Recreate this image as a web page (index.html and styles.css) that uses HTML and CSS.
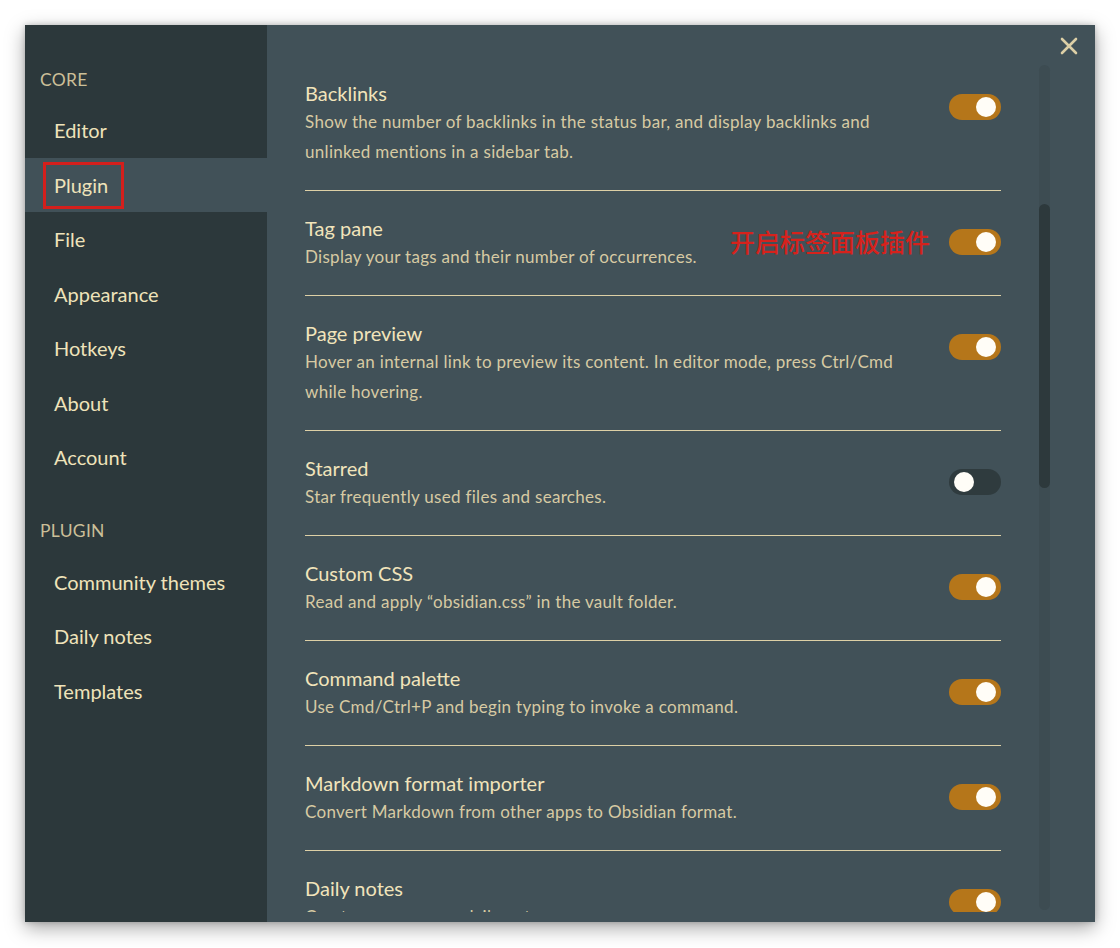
FILE: index.html
```html
<!DOCTYPE html>
<html lang="en">
<head>
<meta charset="utf-8">
<title>Settings</title>
<link rel="stylesheet" href="styles.css">
</head>
<body>
<div class="window">
  <aside class="sidebar">
    <div class="group-title">Core</div>
    <div class="nav-item">Editor</div>
    <div class="nav-item active">Plugin<span class="mark-box"></span></div>
    <div class="nav-item">File</div>
    <div class="nav-item">Appearance</div>
    <div class="nav-item">Hotkeys</div>
    <div class="nav-item">About</div>
    <div class="nav-item">Account</div>
    <div class="group-title second">Plugin</div>
    <div class="nav-item">Community themes</div>
    <div class="nav-item">Daily notes</div>
    <div class="nav-item">Templates</div>
  </aside>
  <main class="main">
    <div class="close"><svg width="18" height="18" viewBox="0 0 18 18"><path d="M2 2 L16 16 M16 2 L2 16" stroke="#dccfa6" stroke-width="2.6" stroke-linecap="round" fill="none"/></svg></div>
    <div class="content">
      <div class="row">
        <div class="info">
          <div class="title">Backlinks</div>
          <div class="desc">Show the number of backlinks in the status bar, and display backlinks and unlinked mentions in a sidebar tab.</div>
        </div>
        <div class="toggle on"><span class="knob"></span></div>
      </div>
      <div class="row">
        <div class="info">
          <div class="title">Tag pane</div>
          <div class="desc">Display your tags and their number of occurrences.</div>
        </div>
        <span class="note">开启标签面板插件</span>
        <div class="toggle on"><span class="knob"></span></div>
      </div>
      <div class="row">
        <div class="info">
          <div class="title">Page preview</div>
          <div class="desc">Hover an internal link to preview its content. In editor mode, press Ctrl/Cmd while hovering.</div>
        </div>
        <div class="toggle on"><span class="knob"></span></div>
      </div>
      <div class="row">
        <div class="info">
          <div class="title">Starred</div>
          <div class="desc">Star frequently used files and searches.</div>
        </div>
        <div class="toggle off"><span class="knob"></span></div>
      </div>
      <div class="row">
        <div class="info">
          <div class="title">Custom CSS</div>
          <div class="desc">Read and apply “obsidian.css” in the vault folder.</div>
        </div>
        <div class="toggle on"><span class="knob"></span></div>
      </div>
      <div class="row">
        <div class="info">
          <div class="title">Command palette</div>
          <div class="desc">Use Cmd/Ctrl+P and begin typing to invoke a command.</div>
        </div>
        <div class="toggle on"><span class="knob"></span></div>
      </div>
      <div class="row">
        <div class="info">
          <div class="title">Markdown format importer</div>
          <div class="desc">Convert Markdown from other apps to Obsidian format.</div>
        </div>
        <div class="toggle on"><span class="knob"></span></div>
      </div>
      <div class="row last">
        <div class="info">
          <div class="title">Daily notes</div>
          <div class="desc">Create or open your daily note.</div>
        </div>
        <div class="toggle on"><span class="knob"></span></div>
      </div>
    </div>
    <div class="scrollbar"><div class="thumb"></div></div>
  </main>
</div>
</body>
</html>
```

FILE: styles.css
```css
* { box-sizing: border-box; }
html, body { margin: 0; padding: 0; background: #ffffff; }
body {
  padding: 25px;
  font-family: Lato, "Noto Sans", sans-serif;
}
.window {
  width: 1070px;
  height: 897px;
  display: flex;
  box-shadow: 0 6px 18px rgba(0,0,0,0.35), 0 0 6px rgba(0,0,0,0.2);
  overflow: hidden;
}
.sidebar {
  width: 242px;
  flex: none;
  background: #2c383b;
  padding-top: 43px;
}
.group-title {
  padding-left: 15px;
  font-size: 17.5px;
  line-height: 24px;
  letter-spacing: 0.3px;
  text-transform: uppercase;
  color: #cbbf98;
  margin-bottom: 11px;
}
.group-title.second { margin-top: 34px; margin-bottom: 12px; }
.nav-item {
  position: relative;
  height: 54.5px;
  line-height: 54.5px;
  padding-left: 29px;
  font-size: 20px;
  color: #efe3ba;
}
.nav-item.active { background: #415158; }
.mark-box {
  position: absolute;
  left: 18px;
  top: 4px;
  width: 81px;
  height: 47px;
  border: 3.5px solid #d41f1c;
}
.main {
  position: relative;
  flex: 1;
  display: flex;
  background: #415158;
  padding: 31px 45px 10px 38px;
}
.close {
  position: absolute;
  top: 12px;
  right: 17px;
  width: 18px;
  height: 18px;
}
.close svg { display: block; }
.content {
  flex: 1;
  overflow: hidden;
  margin-right: 38px;
}
.row {
  position: relative;
  display: flex;
  align-items: flex-start;
  padding: 24px 0 23px;
  border-bottom: 1px solid #ddd0a6;
}
.row.last { border-bottom: none; }
.info { flex: 1; margin-right: 44px; }
.title {
  font-size: 20px;
  line-height: 27px;
  color: #f1e4bb;
}
.desc {
  font-size: 17px;
  letter-spacing: 0.3px;
  line-height: 30px;
  color: #d7caa3;
}
.toggle {
  flex: none;
  width: 52px;
  height: 26px;
  margin-top: 14px;
  border-radius: 13px;
  display: flex;
  align-items: center;
  padding: 0 5px;
}
.toggle.on { background: #b5761a; justify-content: flex-end; }
.toggle.off { background: #2f3b3e; justify-content: flex-start; }
.knob {
  width: 20px;
  height: 20px;
  border-radius: 50%;
  background: #fffdf7;
}
.note {
  position: absolute;
  right: 71px;
  top: 35px;
  font-family: "Noto Sans CJK SC", sans-serif;
  font-size: 25px;
  font-weight: 500;
  line-height: 30px;
  color: #d6221c;
}
.scrollbar {
  flex: none;
  width: 11px;
  height: 845px;
  margin-top: 9px;
  border-radius: 6px;
  background: #3d4c52;
}
.thumb {
  margin-top: 139px;
  height: 284px;
  border-radius: 6px;
  background: #2d393c;
}
```
